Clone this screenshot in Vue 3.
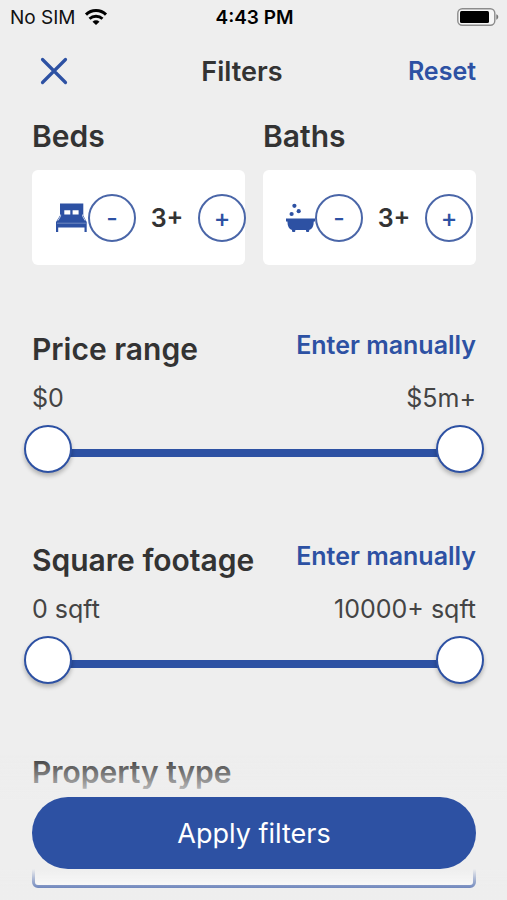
<script setup>
import { reactive } from 'vue'

const counters = reactive([
  { id: 'beds', title: 'Beds', value: 3 },
  { id: 'baths', title: 'Baths', value: 3 },
])

const ranges = reactive([
  { id: 'price', title: 'Price range', lowLabel: '$0', highLabel: '$5m+', low: 0, high: 100 },
  { id: 'area', title: 'Square footage', lowLabel: '0 sqft', highLabel: '10000+ sqft', low: 0, high: 100 },
])

function change(counter, step) {
  counter.value = Math.max(0, counter.value + step)
}

function reset() {
  counters.forEach((c) => { c.value = 3 })
  ranges.forEach((r) => {
    r.low = 0
    r.high = 100
  })
}
</script>

<template>
  <div class="screen">
    <div class="status">
      <div class="carrier">
        <span>No SIM</span>
        <svg class="wifi" viewBox="0 0 24 18" aria-hidden="true">
          <path d="M2 6.6C7.6 1.2 16.4 1.2 22 6.6" fill="none" stroke="#000" stroke-width="3" />
          <path d="M5.500 10.800c3.600-3.400 9.400-3.400 13 0" fill="none" stroke="#000" stroke-width="2.800" />
          <path d="M8.500 13.700c2-1.800 5-1.800 7 0L12 17z" fill="#000" />
        </svg>
      </div>
      <span class="time">4:43 PM</span>
      <svg class="battery" viewBox="0 0 42 18" aria-hidden="true">
        <rect x="0.8" y="0.8" width="37" height="16.4" rx="4.5" fill="#f6f6f6" stroke="#8c8c8c" stroke-width="1.4" />
        <rect x="3" y="3" width="29" height="12" rx="1.5" fill="#000" />
        <path d="M39.3 6.3c2.6.7 2.6 4.7 0 5.4z" fill="#777" />
      </svg>
    </div>

    <header class="bar">
      <button class="close" type="button" aria-label="Close">
        <svg viewBox="0 0 28 28" aria-hidden="true">
          <path d="M2.5 2.5l23 23M25.5 2.5l-23 23" fill="none" stroke="#2d51a3" stroke-width="3.2" stroke-linecap="round" />
        </svg>
      </button>
      <h1>Filters</h1>
      <button class="text-button" type="button" @click="reset">Reset</button>
    </header>

    <main>
      <div class="counters">
        <section v-for="c in counters" :key="c.id">
          <h2>{{ c.title }}</h2>
          <div class="card">
            <svg v-if="c.id === 'beds'" class="bed" viewBox="0 0 33 30" aria-hidden="true">
              <path fill="#2d51a3" d="M5 .5h23.300v12l3.400 6.500v10h-2.200v-4.600H3.200V29H1V19l4-6.500z" />
              <path fill="#fff" d="M9.300 7.200h6v4.300h-6zM17.600 7.200h6v4.300h-6z" />
              <path d="M5.600 11.500v1.700L2.900 17.600M27.600 11.500v1.700l2.500 4.400" fill="none" stroke="#fff" stroke-width=".7" />
              <path d="M2 20.200h28.800" stroke="#8ea3d0" stroke-width=".7" />
            </svg>
            <svg v-else class="bath" viewBox="0 0 29 30" aria-hidden="true">
              <g fill="#2d51a3">
                <circle cx="8.400" cy="2.800" r="2.100" />
                <circle cx="12.700" cy="8.200" r="2.100" />
                <circle cx="5.600" cy="11" r="2.100" />
                <path d="M0 15.500h29v2.900h-1.200c-.1 4.700-1.600 7.500-4.600 8.500v1a1 1 0 0 1-1 1h-1.200a1 1 0 0 1-1-1v-.9H9.300v.9a1 1 0 0 1-1 1H7a1 1 0 0 1-1-1v-1c-3-1-4.500-3.800-4.600-8.500H0z" />
              </g>
            </svg>
            <div class="stepper">
              <button type="button" :aria-label="'Fewer ' + c.id" @click="change(c, -1)">-</button>
              <output>{{ c.value }}+</output>
              <button type="button" :aria-label="'More ' + c.id" @click="change(c, 1)">+</button>
            </div>
          </div>
        </section>
      </div>

      <section v-for="r in ranges" :key="r.id" class="range">
        <div class="range-head">
          <h2>{{ r.title }}</h2>
          <button class="text-button" type="button">Enter manually</button>
        </div>
        <div class="limits">
          <label :for="r.id + '-low'">{{ r.lowLabel }}</label>
          <label :for="r.id + '-high'">{{ r.highLabel }}</label>
        </div>
        <div class="slider">
          <div class="track"></div>
          <input :id="r.id + '-low'" v-model.number="r.low" type="range" min="0" max="100">
          <input :id="r.id + '-high'" v-model.number="r.high" type="range" min="0" max="100">
        </div>
      </section>

      <section class="property">
        <h2>Property type</h2>
        <div class="options"></div>
      </section>
    </main>

    <footer>
      <button class="apply" type="button">Apply filters</button>
    </footer>
  </div>
</template>

<style>
body {
  background: #eee;
}
</style>

<style scoped>
.screen {
  min-height: 100vh;
  box-sizing: border-box;
  background: #eee;
  color: #333;
  font-family: Inter, "Liberation Sans", sans-serif;
}

button {
  padding: 0;
  border: 0;
  background: none;
  color: #2d51a3;
  font-family: inherit;
  cursor: pointer;
}

h1,
h2 {
  margin: 0;
  font-weight: 600;
}

.status {
  display: grid;
  grid-template-columns: 1fr auto 1fr;
  align-items: center;
  height: 34px;
  padding: 0 8px 0 10px;
  color: #111;
  font-size: 19px;
}

.carrier {
  display: flex;
  align-items: center;
  gap: 8px;
}

.wifi {
  width: 24px;
  height: 18px;
}

.time {
  color: #000;
  font-weight: 600;
}

.battery {
  justify-self: end;
  width: 42px;
  height: 18px;
}

.bar {
  display: flex;
  align-items: center;
  justify-content: space-between;
  height: 74px;
  padding: 0 31px 0 32px;
}

.bar h1 {
  font-size: 27px;
}

.close {
  display: flex;
  padding: 8px;
}

.close svg {
  width: 28px;
  height: 28px;
}

.text-button {
  font-size: 25px;
  font-weight: 600;
  line-height: 32px;
}

main {
  padding: 8px 31px 0 32px;
}

h2 {
  font-size: 30px;
  line-height: 40px;
}

.counters {
  display: grid;
  grid-template-columns: repeat(2, minmax(0, 1fr));
  gap: 18px;
}

.card {
  display: flex;
  align-items: center;
  height: 95px;
  margin-top: 14px;
  padding-left: 23px;
  box-sizing: border-box;
  border-radius: 6px;
  background: #fff;
}

.bed {
  flex: none;
  width: 33px;
  height: 30px;
}

.bath {
  flex: none;
  width: 29px;
  height: 30px;
}

.stepper {
  flex: none;
  display: flex;
  align-items: center;
  justify-content: space-between;
  width: 158px;
}

.stepper button {
  width: 48px;
  height: 48px;
  border: 2px solid #4a66a8;
  border-radius: 50%;
  background: #fff;
  font-size: 25px;
  font-weight: 500;
}

.stepper output {
  font-size: 25px;
  font-weight: 600;
}

.range {
  height: 211px;
}

.counters + .range {
  margin-top: 61px;
}

.range-head {
  display: flex;
  align-items: flex-start;
  justify-content: space-between;
  padding-top: 3px;
}

.limits {
  display: flex;
  justify-content: space-between;
  margin-top: 12px;
  color: #444;
  font-size: 25px;
  line-height: 34px;
}

.slider {
  display: grid;
  align-items: center;
  margin: 10px -8px 0;
}

.slider > * {
  grid-area: 1 / 1;
}

.track {
  height: 8px;
  margin: 8px 24px 0;
  background: #2d51a3;
}

.slider input {
  appearance: none;
  width: 100%;
  height: 48px;
  margin: 0;
  background: none;
  pointer-events: none;
}

.slider input::-webkit-slider-thumb {
  appearance: none;
  width: 48px;
  height: 48px;
  box-sizing: border-box;
  border: 2px solid #2d51a3;
  border-radius: 50%;
  background: #fff;
  box-shadow: 0 3px 4px rgba(0, 0, 0, 0.25);
  pointer-events: auto;
}

.property {
  padding: 4px 0 11px;
}

.options {
  height: 80px;
  margin-top: 16px;
  box-sizing: border-box;
  border: 3px solid #2d51a3;
  border-radius: 6px;
  background: #fff;
}

footer {
  position: fixed;
  right: 0;
  bottom: 0;
  left: 0;
  padding: 42px 31px 31px 32px;
  background: linear-gradient(
    rgba(238, 238, 238, 0),
    rgba(238, 238, 238, 0.65) 32px,
    rgb(238, 238, 238) 46px,
    rgb(238, 238, 238) calc(100% - 31px),
    rgba(238, 238, 238, 0.35) calc(100% - 12px),
    rgba(238, 238, 238, 0.35)
  );
}

.apply {
  display: block;
  width: 100%;
  height: 72px;
  border-radius: 36px;
  background: #2d51a3;
  color: #fff;
  font-size: 27px;
}
</style>
